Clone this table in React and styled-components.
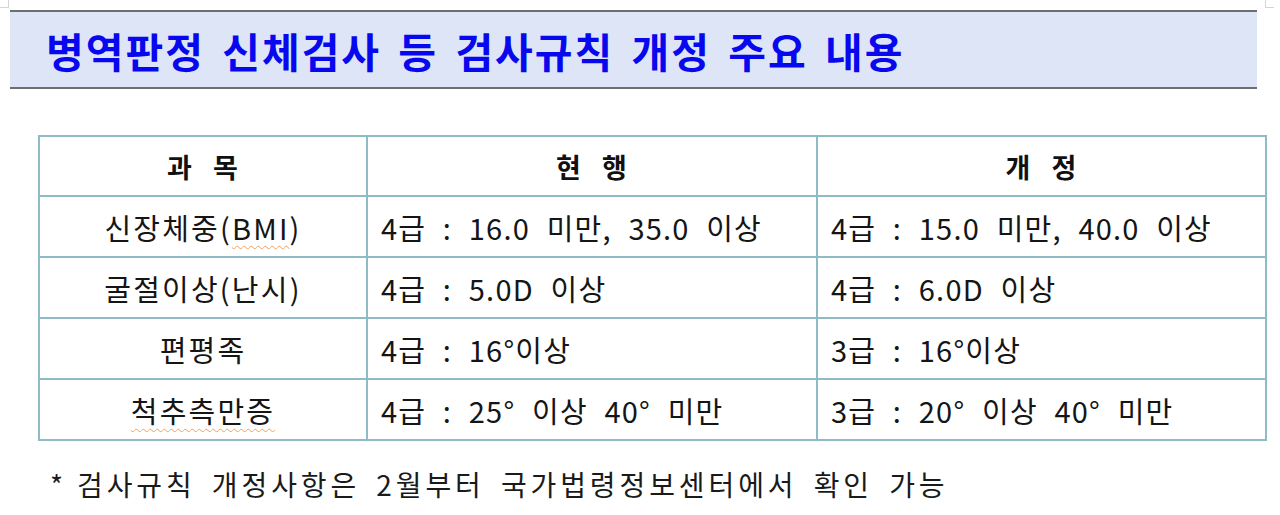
import React from "react";
import styled, { createGlobalStyle } from "styled-components";

const Global = createGlobalStyle`
  html, body { margin: 0; padding: 0; background: #ffffff; }
  body { font-family: "Noto Sans CJK KR", "Noto Sans", sans-serif; }
`;

const Page = styled.div`
  position: relative;
  width: 1280px;
  height: 515px;
  padding-top: 10px;
  box-sizing: border-box;
  overflow: hidden;
`;

const CornerMark = styled.div`
  position: absolute;
  top: 0;
  ${(p) => (p.$right ? "left: 1265px;" : "left: 0;")}
  width: 8px;
  height: 7px;
  border: 1px solid #d4d4d4;
  border-top: none;
  ${(p) => (p.$right ? "border-right: none;" : "border-left: none;")}
`;

const TitleBar = styled.div`
  margin-left: 10px;
  width: 1211px;
  height: 75px;
  background: #dee5f6;
  border-top: 2px solid #6e6e6e;
  border-bottom: 2px solid #6e6e6e;
  display: flex;
  align-items: center;
  padding-left: 36px;
  box-sizing: content-box;
`;

const Title = styled.h1`
  margin: 0;
  font-family: "Noto Sans CJK KR", sans-serif;
  font-weight: 700;
  font-size: 41px;
  letter-spacing: 2px;
  word-spacing: 6px;
  color: #0808ee;
  line-height: 1;
  transform: translateY(1px);
`;

const Table = styled.table`
  margin-top: 46px;
  margin-left: 38px;
  width: 1227px;
  border-collapse: collapse;
  table-layout: fixed;
`;

const Col = styled.col`
  width: ${(p) => p.$w}px;
`;

const HeadCell = styled.th`
  height: 58px;
  border: 2px solid #8dbcc5;
  font-family: "Noto Sans CJK KR", sans-serif;
  font-weight: 700;
  font-size: 27px;
  letter-spacing: 1px;
  word-spacing: 13px;
  color: #111;
  text-align: center;
  padding: 0;
`;

const Cell = styled.td`
  height: 59px;
  border: 2px solid #8dbcc5;
  font-family: "Noto Sans CJK KR", sans-serif;
  font-weight: 400;
  font-size: 29px;
  color: #151515;
  text-align: ${(p) => (p.$center ? "center" : "left")};
  padding: ${(p) => (p.$center ? "0" : "0 0 0 13px")};
  white-space: pre;
  letter-spacing: ${(p) => (p.$center ? "2.2px" : "1.2px")};
  word-spacing: 9px;
`;

const Spell = styled.span`
  text-decoration: underline wavy #f0a060;
  text-decoration-thickness: 1px;
  text-underline-offset: 5px;
`;

const Note = styled.p`
  margin: 27px 0 0 50px;
  font-family: "Noto Sans CJK KR", sans-serif;
  font-size: 28px;
  font-weight: 400;
  color: #1a1a1a;
  letter-spacing: 3.9px;
  word-spacing: 6px;
  line-height: 1.2;
  white-space: nowrap;
`;

const Star = styled.span`
  display: inline-block;
  width: 27px;
  letter-spacing: 0;
`;

const rows = [
  { name: <>신장체중(<Spell>BMI</Spell>)</>, cur: "4급 : 16.0 미만, 35.0 이상", next: "4급 : 15.0 미만, 40.0 이상" },
  { name: "굴절이상(난시)", cur: "4급 : 5.0D 이상", next: "4급 : 6.0D 이상" },
  { name: "편평족", cur: "4급 : 16°이상", next: "3급 : 16°이상" },
  { name: <Spell>척추측만증</Spell>, cur: "4급 : 25° 이상 40° 미만", next: "3급 : 20° 이상 40° 미만" },
];

export default function App() {
  return (
    <>
      <Global />
      <Page>
        <CornerMark />
        <CornerMark $right />
        <TitleBar>
          <Title>병역판정 신체검사 등 검사규칙 개정 주요 내용</Title>
        </TitleBar>
        <Table>
          <colgroup>
            <Col $w={328} />
            <Col $w={450} />
            <Col $w={449} />
          </colgroup>
          <thead>
            <tr>
              <HeadCell>과 목</HeadCell>
              <HeadCell>현 행</HeadCell>
              <HeadCell>개 정</HeadCell>
            </tr>
          </thead>
          <tbody>
            {rows.map((r, i) => (
              <tr key={i}>
                <Cell $center>{r.name}</Cell>
                <Cell>{r.cur}</Cell>
                <Cell>{r.next}</Cell>
              </tr>
            ))}
          </tbody>
        </Table>
        <Note>
          <Star>*</Star>검사규칙 개정사항은 2월부터 국가법령정보센터에서 확인 가능
        </Note>
      </Page>
    </>
  );
}
